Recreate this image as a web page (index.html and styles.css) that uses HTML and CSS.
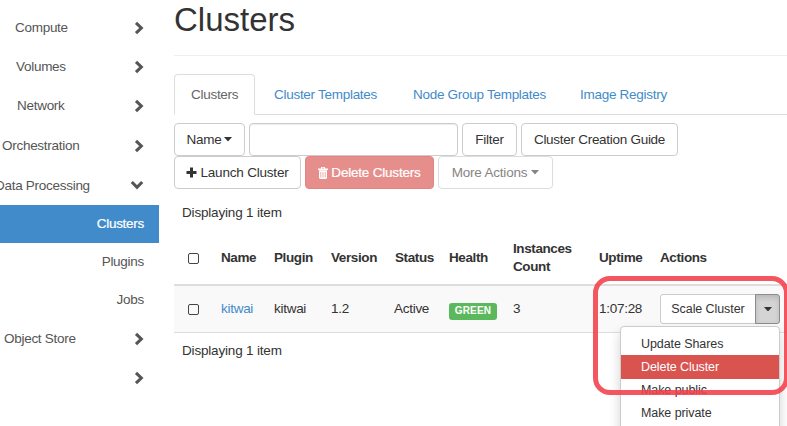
FILE: index.html
```html
<!DOCTYPE html>
<html lang="en">
<head>
<meta charset="utf-8">
<title>Clusters</title>
<link rel="stylesheet" href="styles.css">
</head>
<body>
<svg class="defs" aria-hidden="true">
  <symbol id="chevron" viewBox="0 0 10 14"><path d="M2 1.800 L7.300 7 L2 12.200" fill="none" stroke="currentColor" stroke-width="3.1"/></symbol>
  <symbol id="caret" viewBox="0 0 8 4.500"><path d="M0 0H8L4 4.500Z" fill="currentColor"/></symbol>
</svg>
<div class="page">
  <nav class="sidebar">
    <a class="group compute"><span>Compute</span><svg class="chev"><use href="#chevron"/></svg></a>
    <a class="group volumes"><span>Volumes</span><svg class="chev"><use href="#chevron"/></svg></a>
    <a class="group network"><span>Network</span><svg class="chev"><use href="#chevron"/></svg></a>
    <a class="group orchestration"><span>Orchestration</span><svg class="chev"><use href="#chevron"/></svg></a>
    <a class="group processing"><span>Data Processing</span><svg class="chev open"><use href="#chevron"/></svg></a>
    <a class="leaf active"><span>Clusters</span></a>
    <a class="leaf"><span>Plugins</span></a>
    <a class="leaf"><span>Jobs</span></a>
    <a class="group store"><span>Object Store</span><svg class="chev"><use href="#chevron"/></svg></a>
    <a class="group"><span></span><svg class="chev"><use href="#chevron"/></svg></a>
  </nav>
  <main class="content">
    <h1>Clusters</h1>
    <div class="tabs">
      <a class="tab current">Clusters</a><a class="tab templates">Cluster Templates</a><a class="tab groups">Node Group Templates</a><a class="tab">Image Registry</a>
    </div>
    <div class="tools">
      <button class="btn name">Name <svg class="caret"><use href="#caret"/></svg></button>
      <input class="search" type="text" aria-label="Filter text">
      <button class="btn filter">Filter</button>
      <button class="btn guide">Cluster Creation Guide</button>
    </div>
    <div class="tools second">
      <button class="btn launch"><svg class="plus" viewBox="0 0 11 11"><path d="M4 0.500H7V4H10.500V7H7V10.500H4V7H0.500V4H4Z" fill="currentColor"/></svg>Launch Cluster</button>
      <button class="btn danger"><svg class="trash" viewBox="0 0 10 12"><path fill="currentColor" fill-rule="evenodd" d="M3 0H7V1.500H10V3H0V1.500H3ZM4 .8V1.500H6V.8ZM1 3.300H9V11L8 12H2L1 11ZM2.500 5V10.500H3.200V5ZM4.650 5V10.500H5.350V5ZM6.800 5V10.500H7.500V5Z"/></svg>Delete Clusters</button>
      <button class="btn more">More Actions <svg class="caret"><use href="#caret"/></svg></button>
    </div>
    <p class="count">Displaying 1 item</p>
    <div class="row head">
      <span class="cell"><i class="check"></i></span><span>Name</span><span>Plugin</span><span>Version</span><span class="status">Status</span><span>Health</span><span>Instances<br>Count</span><span>Uptime</span><span>Actions</span>
    </div>
    <div class="row item">
      <span class="cell"><i class="check"></i></span><a class="link">kitwai</a><span>kitwai</span><span>1.2</span><span>Active</span><span class="badge">GREEN</span><span>3</span><span>1:07:28</span>
      <div class="split">
        <button class="scale">Scale Cluster</button><button class="toggle"><svg class="caret small"><use href="#caret"/></svg></button>
        <div class="menu"><a>Update Shares</a><a class="delete">Delete Cluster</a><a class="public">Make public</a><a class="private">Make private</a><a>&nbsp;</a></div>
      </div>
    </div>
    <p class="count bottom">Displaying 1 item</p>
  </main>
</div>
<div class="highlight"></div>
</body>
</html>
```
FILE: styles.css
```css
* { box-sizing: border-box; }
body { margin: 0; font: 13.5px/20px "Liberation Sans", Arial, sans-serif; letter-spacing: -.28px; color: #333; background: #fff; overflow: hidden; }
.defs { position: absolute; width: 0; height: 0; }
.page { display: flex; width: 787px; height: 426px; overflow: hidden; }
.sidebar { width: 159px; flex: none; padding-top: 8px; color: #555; }
.group { display: flex; align-items: center; justify-content: space-between; height: 39.4px; padding: 0 15px 0 0; white-space: nowrap; }
.compute { padding-left: 15px; }
.volumes { padding-left: 16px; }
.network { padding-left: 17px; }
.orchestration { padding-left: 2px; }
.processing span { margin-left: -5px; padding-top: 1px; }
.store { padding-left: 4px; }
.chev { width: 10px; height: 14px; flex: none; }
.chev.open { transform: rotate(90deg); margin-right: 2px; }
.leaf { display: flex; align-items: center; justify-content: flex-end; height: 38px; padding-right: 15px; }
.active { color: #fff; background: #428bca; -webkit-text-stroke: .2px #fff; }
.content { width: 613px; margin-left: 15px; flex: none; }
h1 { height: 56px; margin: 0; padding-top: 1px; font-size: 33px; line-height: 37px; font-weight: 400; letter-spacing: 0; border-bottom: 1px solid #eee; }
.tabs { display: flex; height: 41px; margin-top: 18px; border-bottom: 1px solid #ddd; }
.tab { height: 41px; padding: 0 17px; line-height: 41px; color: #428bca; white-space: nowrap; }
.current { width: 81px; padding: 0 16px; line-height: 39px; color: #666; background: #fff; border: 1px solid #ddd; border-bottom-color: #fff; border-radius: 4px 4px 0 0; }
.templates { width: 141px; padding-left: 19px; }
.groups { width: 167px; }
.tools { display: flex; gap: 4px; margin-top: 8px; height: 33px; }
.second { margin-top: 0; }
button { font: inherit; letter-spacing: inherit; color: #333; margin: 0; }
.btn { display: flex; align-items: center; justify-content: center; height: 33px; padding: 0; border: 1px solid #ccc; border-radius: 4px; background: #fff; white-space: nowrap; }
.caret { width: 8px; height: 4.5px; margin-left: 4px; }
.name { width: 71px; }
.name .caret { margin-left: 3px; }
.search { width: 209px; border: 1px solid #ccc; border-radius: 4px; box-shadow: inset 0 1px 1px rgba(0,0,0,.075); }
.filter { width: 55px; }
.guide { width: 157px; }
.launch { width: 127px; letter-spacing: -.2px; }
.plus { width: 11px; height: 11px; margin-right: 3px; }
.danger { width: 129px; letter-spacing: -.2px; color: #fff; background: #e68e8c; border-color: #e28582; -webkit-text-stroke: .2px #fff; }
.trash { width: 10px; height: 12px; margin-right: 3px; }
.more { width: 115px; color: #858585; border-color: #ddd; letter-spacing: -.2px; }
.count { margin: 14px 0 0 8px; line-height: 20px; letter-spacing: -.18px; }
.row { display: grid; grid-template-columns: 47px 53px 57px 63px 55px 64px 86px 61px 127px; align-items: center; }
.head { height: 63px; font-weight: 700; line-height: 18px; letter-spacing: -.4px; border-bottom: 2px solid #ddd; padding-top: 9px; }
.status { padding-left: 1px; }
.cell { padding-left: 14px; display: flex; align-items: center; }
.check { width: 11px; height: 11px; border: 1.5px solid #444; border-radius: 2px; margin-top: 1px; }
.item { height: 47px; background: #f9f9f9; border-bottom: 1px solid #ddd; }
.link { color: #428bca; }
.badge { justify-self: start; width: 48px; height: 17px; margin-top: 4px; border-radius: 3px; background: #5cb85c; color: #fff; font-size: 10px; letter-spacing: .2px; line-height: 16px; font-weight: 700; text-align: center; }
.split { position: relative; display: flex; width: 120px; height: 30px; }
.scale { width: 96px; padding: 0; border: 1px solid #ccc; border-radius: 3px 0 0 3px; background: #fff; font-size: 12.5px; letter-spacing: -.08px; }
.toggle { width: 25px; margin-left: -1px; padding: 0; display: flex; align-items: center; justify-content: center; background: #d4d4d4; border: 1px solid #8c8c8c; border-radius: 0 3px 3px 0; box-shadow: inset 0 3px 5px rgba(0,0,0,.125); }
.toggle .small { width: 8px; margin: 0; }
.menu { position: absolute; top: 32px; right: 0; width: 160px; padding: 5px 0; border: 1px solid #ccc; border-radius: 4px; background: #fff; box-shadow: 0 6px 12px rgba(0,0,0,.175); font-size: 12.5px; letter-spacing: -.08px; }
.menu a { display: block; height: 23px; padding-left: 20px; line-height: 24px; }
.menu .delete { color: #fff; background: #d9534f; height: 24px; }
.menu .public, .menu .private { line-height: 22px; }
.bottom { margin-top: 8px; }
.highlight { position: absolute; left: 593px; top: 276px; width: 196px; height: 119px; border: 5px solid rgba(242,63,73,.88); border-radius: 17px; pointer-events: none; }
```
